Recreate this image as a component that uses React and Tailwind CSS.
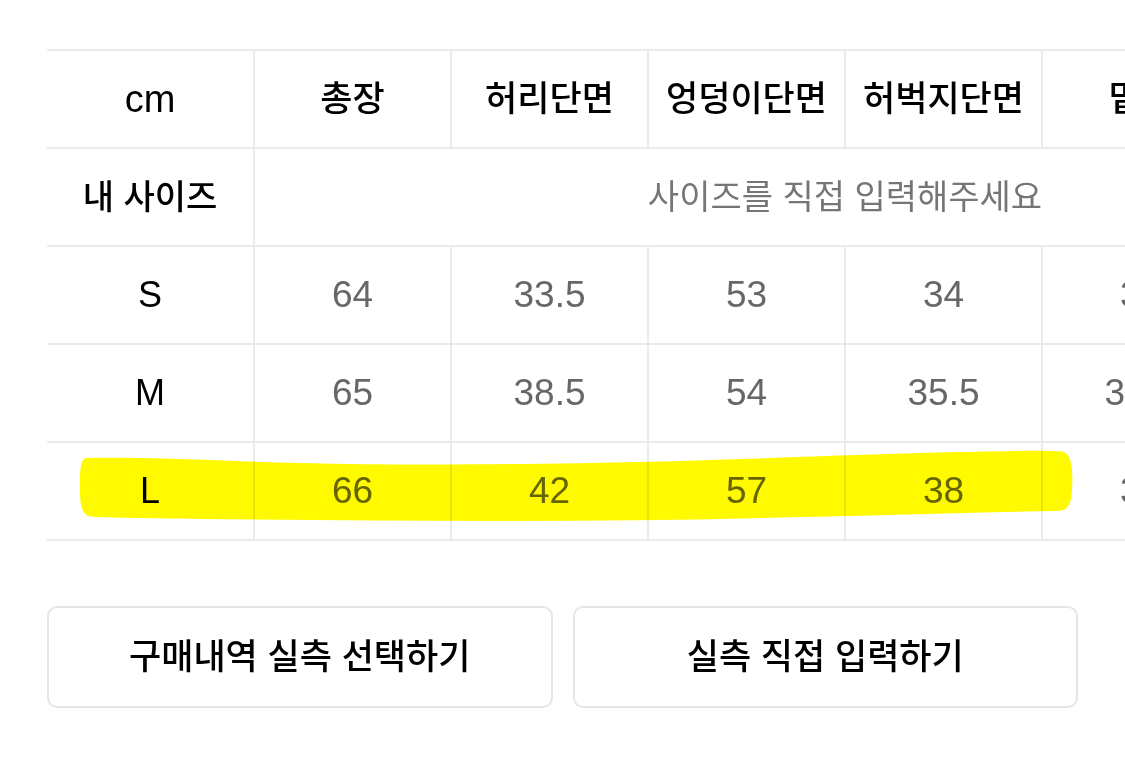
import React from "react";

// size chart — first column fixed, measurement columns clipped at the right edge
const cols = ["총장", "허리단면", "엉덩이단면", "허벅지단면", "밑위", "밑단단면"];
const rows = [
  { size: "S", vals: ["64", "33.5", "53", "34", "30", "21"] },
  { size: "M", vals: ["65", "38.5", "54", "35.5", "31.5", "22"] },
  { size: "L", vals: ["66", "42", "57", "38", "32", "23"] },
];

const font = { fontFamily: '"Liberation Sans", "Noto Sans CJK KR", sans-serif' };

const cell = "h-[98px] flex items-center justify-center border-b-2 border-r-2 border-[#ebebeb] whitespace-nowrap";

export default function App() {
  return (
    <div className="relative w-[1125px] h-[770px] bg-white overflow-hidden" style={font}>
      <div className="pt-[49px] pl-[47px] overflow-hidden">
        <div className="grid grid-cols-[208px_repeat(6,197px)] w-[1390px] border-t-2 border-[#ebebeb]">
          <div className={`${cell} text-[38px] text-black`}>cm</div>
          {cols.map((c) => (
            <div key={c} className={`${cell} text-[35px] font-medium text-black`}>{c}</div>
          ))}

          <div className={`${cell} text-[34px] font-medium text-black`}>내 사이즈</div>
          <div className={`${cell} col-span-6 text-[34px] text-[#767676]`}>사이즈를 직접 입력해주세요</div>

          {rows.map((r) => (
            <React.Fragment key={r.size}>
              <div className={`${cell} text-[36px] text-black`}>{r.size}</div>
              {r.vals.map((v, i) => (
                <div key={i} className={`${cell} text-[37px] text-[#676767]`}>{v}</div>
              ))}
            </React.Fragment>
          ))}
        </div>
      </div>

      <div className="mt-[65px] px-[47px] flex gap-[20px]">
        <button className="flex-1 h-[102px] rounded-[10px] border-2 border-[#e6e6e6] text-[35px] font-medium text-black">
          구매내역 실측 선택하기
        </button>
        <button className="flex-1 h-[102px] rounded-[10px] border-2 border-[#e6e6e6] text-[35px] font-medium text-black">
          실측 직접 입력하기
        </button>
      </div>

      {/* highlighter stroke over the L row */}
      <svg className="absolute top-0 left-0 pointer-events-none mix-blend-multiply" width="1125" height="770" viewBox="0 0 1125 770">
        <path
          d="M86 458 C150 457 220 461 300 463 C420 466 540 464 640 462 C760 459 860 454 960 452 C1010 451 1050 450 1064 452 C1072 456 1073 470 1072 490 C1071 504 1069 510 1058 511 C980 512 900 515 800 517 C700 520 600 521 500 521 C400 521 300 520 200 519 C140 518 100 518 88 516 C80 512 80 500 80 486 C80 470 80 460 86 458 Z"
          fill="#fffa00"
        />
      </svg>
    </div>
  );
}
